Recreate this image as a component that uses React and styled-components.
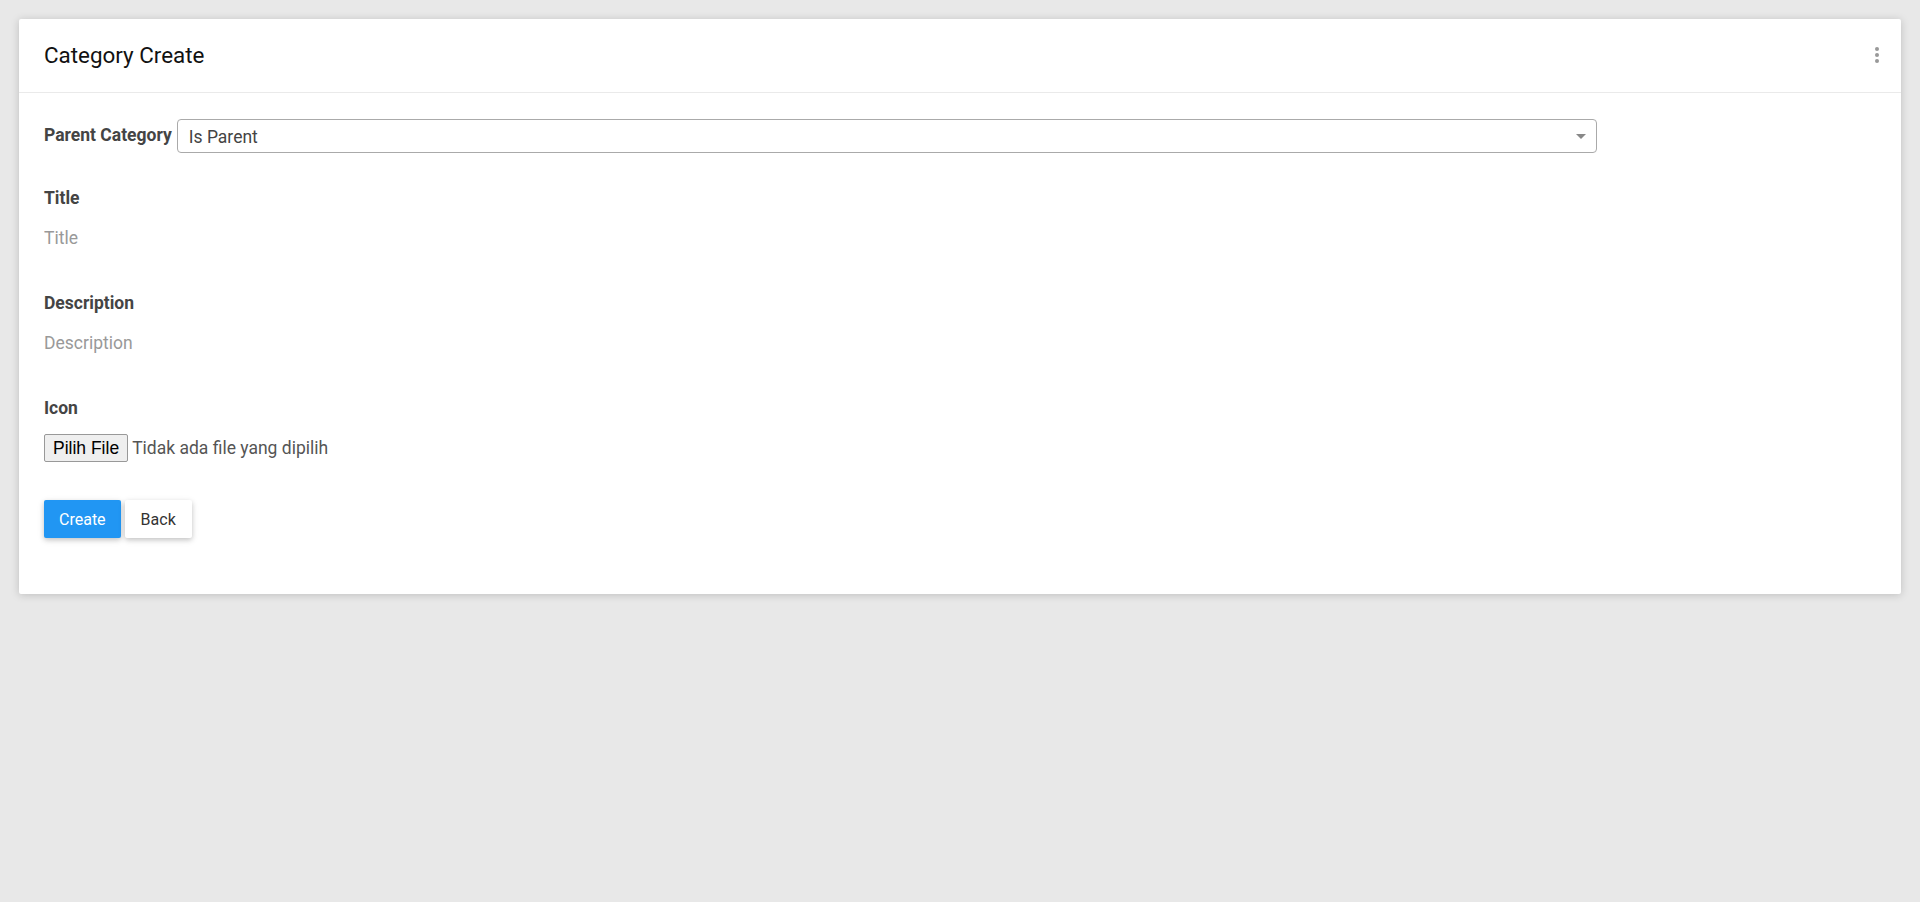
import React from 'react';
import styled, { createGlobalStyle } from 'styled-components';

const GlobalStyle = createGlobalStyle`
  html, body {
    margin: 0;
    padding: 0;
    background: #e8e8e8;
    font-family: Roboto, "Liberation Sans", sans-serif;
  }
  * { box-sizing: border-box; }
`;

const Page = styled.div`
  padding: 19px;
  min-height: 902px;
`;

const Card = styled.div`
  background: #fff;
  border-radius: 2px;
  box-shadow: 0 1px 8px rgba(0, 0, 0, 0.18);
`;

const CardHeader = styled.div`
  height: 74px;
  padding: 0 17px 2px 25px;
  display: flex;
  align-items: center;
  justify-content: space-between;
  border-bottom: 1px solid #eaeaea;
`;

const CardTitle = styled.h2`
  margin: 0;
  font-size: 22.4px;
  font-weight: 400;
  color: #111;
`;

const MenuButton = styled.button`
  border: none;
  background: none;
  padding: 4px;
  cursor: pointer;
  display: flex;
`;

const CardBody = styled.div`
  padding: 26px 25px 56px;
`;

const InlineRow = styled.div`
  display: flex;
  align-items: flex-start;
  gap: 5px;
  margin-bottom: 33px;
`;

const Label = styled.label`
  display: block;
  font-size: 17.5px;
  font-weight: 700;
  line-height: 24px;
  color: #444;
  margin: ${p => (p.inline ? '4px 0 0' : '0 0 8px')};
`;

const SelectBox = styled.div`
  width: 1420px;
  height: 34px;
  border: 1px solid #aaa;
  border-radius: 4px;
  display: flex;
  align-items: center;
  justify-content: space-between;
  padding: 2px 10px 0 11px;
  font-size: 17.5px;
  color: #444;
  cursor: pointer;
`;

const Caret = styled.span`
  width: 0;
  height: 0;
  margin-top: -2px;
  border-left: 5px solid transparent;
  border-right: 5px solid transparent;
  border-top: 5px solid #888;
`;

const Group = styled.div`
  margin-bottom: 33px;
`;

const TextInput = styled.input`
  display: block;
  width: 100%;
  height: 40px;
  padding: 8px 0;
  border: none;
  outline: none;
  font-family: inherit;
  font-size: 17.5px;
  line-height: 24px;
  color: #333;
  &::placeholder {
    color: #999;
  }
`;

const FileRow = styled.div`
  height: 40px;
  display: flex;
  align-items: center;
  gap: 4px;
`;

const FileButton = styled.span`
  height: 28px;
  display: inline-flex;
  align-items: center;
  padding: 0 8px;
  font-family: "Liberation Sans", Arial, sans-serif;
  font-size: 17.5px;
  color: #000;
  background: #efefef;
  border: 1px solid #999;
  border-radius: 2px;
`;

const FileName = styled.span`
  font-size: 17.5px;
  color: #555;
`;

const Actions = styled.div`
  display: flex;
  gap: 4px;
  margin-top: -1px;
`;

const Button = styled.button`
  height: 38px;
  padding: 0 ${p => (p.primary ? '15px' : '16px')};
  border: none;
  border-radius: 2px;
  font-family: inherit;
  font-size: 16px;
  cursor: pointer;
  background: ${p => (p.primary ? '#2196f3' : '#fff')};
  color: ${p => (p.primary ? '#fff' : '#333')};
  box-shadow: 0 2px 5px rgba(0, 0, 0, 0.18), 0 2px 8px rgba(0, 0, 0, 0.08);
`;

function DotsIcon() {
  return (
    <svg width="6" height="18" viewBox="0 0 6 18">
      <circle cx="3" cy="3" r="2" fill="#999" />
      <circle cx="3" cy="9" r="2" fill="#999" />
      <circle cx="3" cy="15" r="2" fill="#999" />
    </svg>
  );
}

export default function App() {
  return (
    <>
      <GlobalStyle />
      <Page>
        <Card>
          <CardHeader>
            <CardTitle>Category Create</CardTitle>
            <MenuButton aria-label="menu">
              <DotsIcon />
            </MenuButton>
          </CardHeader>
          <CardBody>
            <InlineRow>
              <Label inline>Parent Category</Label>
              <SelectBox>
                <span>Is Parent</span>
                <Caret />
              </SelectBox>
            </InlineRow>

            <Group>
              <Label>Title</Label>
              <TextInput placeholder="Title" />
            </Group>

            <Group>
              <Label>Description</Label>
              <TextInput placeholder="Description" />
            </Group>

            <Group>
              <Label>Icon</Label>
              <FileRow>
                <FileButton>Pilih File</FileButton>
                <FileName>Tidak ada file yang dipilih</FileName>
              </FileRow>
            </Group>

            <Actions>
              <Button primary>Create</Button>
              <Button>Back</Button>
            </Actions>
          </CardBody>
        </Card>
      </Page>
    </>
  );
}
